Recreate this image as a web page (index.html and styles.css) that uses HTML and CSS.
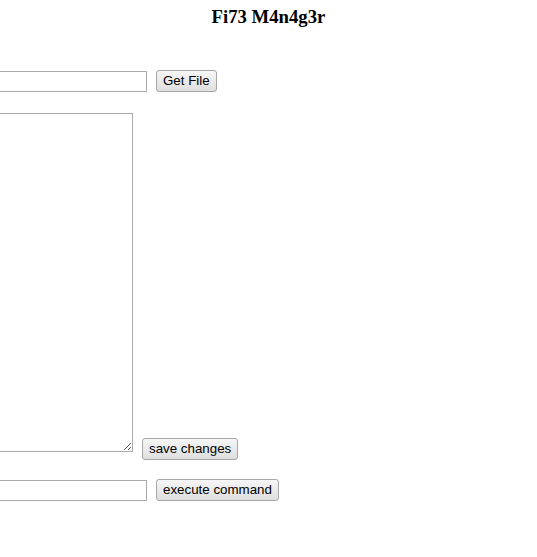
FILE: index.html
```html
<!DOCTYPE html>
<html>
<head>
<meta charset="utf-8">
<title>Fi73 M4n4g3r</title>
<link rel="stylesheet" href="styles.css">
</head>
<body>
<h3 class="title">Fi73 M4n4g3r</h3>
<form class="panel">
  <div class="row row-file">
    <input class="field" type="text">
    <button class="btn" type="button">Get File</button>
  </div>
  <div class="row row-edit">
    <textarea class="editor"></textarea>
    <button class="btn btn-save" type="button">save changes</button>
  </div>
  <div class="row row-cmd">
    <input class="field" type="text">
    <button class="btn" type="button">execute command</button>
  </div>
</form>
</body>
</html>
```
FILE: styles.css
```css
html, body {
  margin: 0;
  padding: 0;
  background: #fff;
  overflow: hidden;
}
body {
  font-family: "Liberation Serif", "Times New Roman", serif;
  color: #000;
}
.title {
  margin: 0;
  padding-top: 6px;
  text-align: center;
  font-size: 18.72px;
  font-weight: bold;
}
.panel {
  margin: 0 0 0 -53px;
  padding-top: 42px;
  display: flex;
  flex-direction: column;
}
.row {
  display: flex;
  align-items: flex-end;
  gap: 9px;
}
.row-edit {
  margin-top: 21px;
}
.row-cmd {
  margin-top: 19px;
}
.field {
  box-sizing: border-box;
  width: 200px;
  height: 21px;
  margin: 0;
  border: 1px solid #a9a9a9;
  background: #fff;
  font-family: "Liberation Sans", Arial, sans-serif;
  font-size: 13.33px;
}
.editor {
  box-sizing: border-box;
  width: 186px;
  height: 339px;
  margin: 0 0 8px 0;
  border: 1px solid #a9a9a9;
  background: #fff;
  font-family: "Liberation Mono", monospace;
  font-size: 13.33px;
}
.btn {
  box-sizing: border-box;
  height: 22px;
  margin: 0;
  padding: 2px 6px 2px;
  border: 1px solid #a7a7a7;
  border-radius: 3px;
  background: linear-gradient(#f6f6f6, #dedede);
  font-family: "Liberation Sans", Arial, sans-serif;
  font-size: 13.33px;
  color: #000;
  line-height: 16px;
}
```
